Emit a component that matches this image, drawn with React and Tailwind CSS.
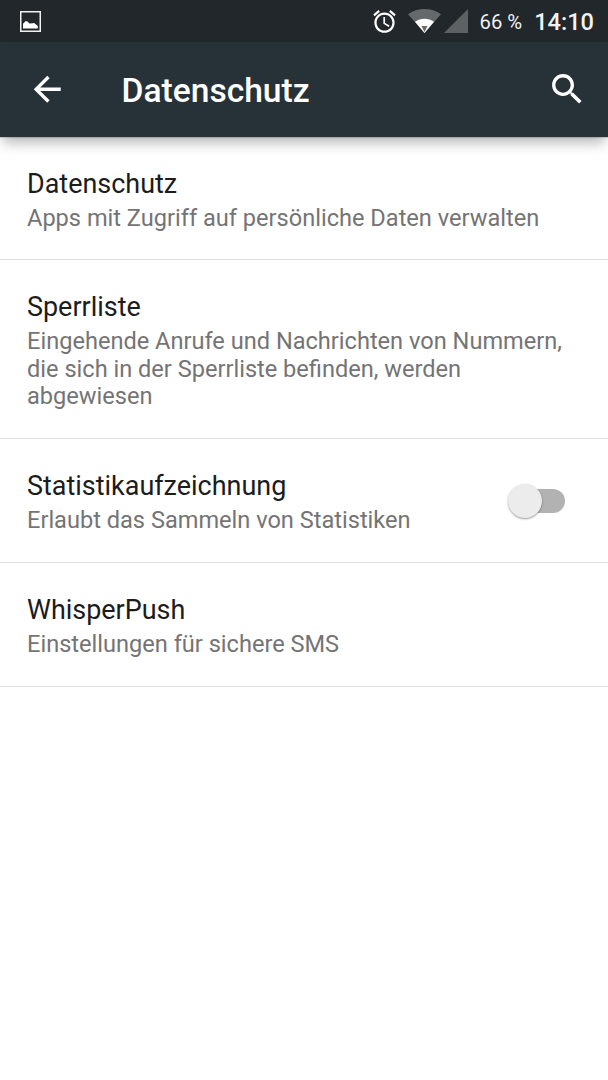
import React from 'react';

const ITEMS = [
  { title: 'Datenschutz', summary: 'Apps mit Zugriff auf persönliche Daten verwalten', height: 'h-[123px] pt-px' },
  { title: 'Sperrliste', summary: 'Eingehende Anrufe und Nachrichten von Nummern, die sich in der Sperrliste befinden, werden abgewiesen', height: 'h-[179px] pt-px' },
  { title: 'Statistikaufzeichnung', summary: 'Erlaubt das Sammeln von Statistiken', height: 'h-[124px]', toggle: true },
  { title: 'WhisperPush', summary: 'Einstellungen für sichere SMS', height: 'h-[124px]' },
];

function StatusBar() {
  return (
    <div className="h-[42px] bg-[#21272b] text-[#f2f2f2] flex items-center pl-5 pr-[14px]">
      <svg className="w-[21px] h-[21px]" viewBox="0 0 21 21" fill="none">
        <rect x="0.75" y="0.75" width="19.5" height="19.5" stroke="#f2f2f2" strokeWidth="1.5" />
        <path d="M3 17.5V12.8L5.8 10L7.4 10.4L9.5 12.6L12.8 12.2L14.2 12L17.8 15V17.5Z" fill="#fff" />
      </svg>
      <svg className="w-[27px] h-[27px] ml-auto" viewBox="0 0 24 24" fill="#fff">
        <path d="M22 5.72l-4.6-3.86-1.29 1.53 4.6 3.86L22 5.72zM7.88 3.39L6.6 1.86 2 5.71l1.29 1.53 4.59-3.85zM12.5 8H11v6l4.75 2.85.75-1.23-4-2.37V8zM12 4c-4.97 0-9 4.03-9 9s4.02 9 9 9c4.97 0 9-4.03 9-9s-4.03-9-9-9zm0 16c-3.87 0-7-3.13-7-7s3.13-7 7-7 7 3.13 7 7-3.13 7-7 7z" />
      </svg>
      <svg className="w-[33px] h-6 ml-[10px]" viewBox="0 0 33 24">
        <path d="M0 5.2C9.5-1.7 23.5-1.7 33 5.2L16.5 24Z" fill="#66696b" />
        <path d="M7 12.8C12.5 8.8 20.5 8.8 26 12.8L16.5 24Z" fill="#fff" />
        <path d="M13.5 17H19.5L16.5 23Z" fill="#66696b" />
      </svg>
      <svg className="w-6 h-6 ml-[3px]" viewBox="0 0 24 24" fill="#5d6163">
        <path d="M24 0V24H0Z" />
      </svg>
      <span className="ml-3 text-[20.25px] leading-none mt-[3px]">66 %</span>
      <span className="ml-3 text-[23.6px] leading-none font-medium mt-[3px]">14:10</span>
    </div>
  );
}

function AppBar() {
  return (
    <header className="relative h-[95px] bg-[#263238] text-white flex items-center pl-[27px] pr-[20.5px] shadow-[0_9px_12px_-3px_rgba(0,0,0,0.28),0_1px_1px_rgba(0,0,0,0.15)]">
      <button aria-label="Zurück">
        <svg className="w-[40.5px] h-[40.5px]" viewBox="0 0 24 24" fill="currentColor">
          <path d="M20 11H7.83l5.59-5.59L12 4l-8 8 8 8 1.41-1.41L7.83 13H20v-2z" />
        </svg>
      </button>
      <h1 className="ml-[54px] mt-[3px] text-[33.6px] leading-none font-medium">Datenschutz</h1>
      <button aria-label="Suchen" className="ml-auto">
        <svg className="w-[40.5px] h-[40.5px]" viewBox="0 0 24 24" fill="currentColor">
          <path d="M15.5 14h-.79l-.28-.27C15.41 12.59 16 11.11 16 9.5 16 5.91 13.09 3 9.5 3S3 5.91 3 9.5 5.91 16 9.5 16c1.61 0 3.09-.59 4.23-1.57l.27.28v.79l5 4.99L20.49 19l-4.99-5zm-6 0C7.01 14 5 11.99 5 9.5S7.01 5 9.5 5 14 7.01 14 9.5 11.99 14 9.5 14z" />
        </svg>
      </button>
    </header>
  );
}

function Toggle() {
  return (
    <button role="switch" aria-checked="false" className="w-[57px] h-9 mr-[43px] flex items-center">
      <span className="w-[34px] h-[34px] shrink-0 rounded-full bg-[#ececec] shadow-[0_1px_2px_rgba(0,0,0,0.4)] z-10" />
      <span className="w-[39px] h-6 -ml-4 rounded-full bg-[#b2b2b2]" />
    </button>
  );
}

export default function App() {
  return (
    <div className="w-full h-[1080px] bg-white overflow-hidden font-['Roboto',sans-serif]">
      <StatusBar />
      <AppBar />
      <ul>
        {ITEMS.map(item => (
          <li key={item.title} className={`${item.height} flex items-center border-b border-[#e0e0e0]`}>
            <div className="flex-1 pl-[27px] pr-[27px]">
              <p className="text-[26.95px] leading-[38px] text-[#1c1c1c]">{item.title}</p>
              <p className="mt-[2px] text-[23.58px] leading-[27.6px] text-[#747474]">{item.summary}</p>
            </div>
            {item.toggle ? <Toggle /> : null}
          </li>
        ))}
      </ul>
    </div>
  );
}
